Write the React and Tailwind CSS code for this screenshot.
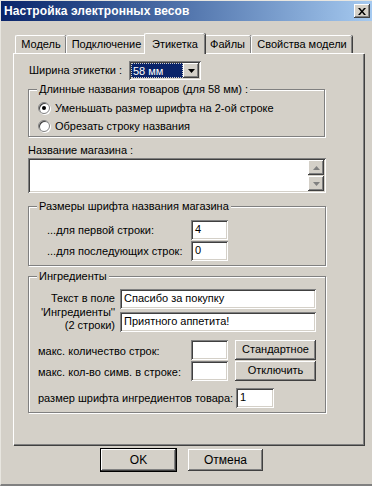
import React from 'react';

const raisedBtn =
  'shadow-[inset_-1px_-1px_#404040,inset_1px_1px_#ffffff,inset_-2px_-2px_#808080,inset_2px_2px_#d4d0c8]';
const sunken =
  'shadow-[inset_1px_1px_#808080,inset_-1px_-1px_#ffffff,inset_2px_2px_#404040,inset_-2px_-2px_#d4d0c8]';

function Field({ value = '', className = '' }) {
  return (
    <div className={`bg-white ${sunken} h-[20px] pl-[4px] pt-[3px] leading-[13px] ${className}`}>
      {value}
    </div>
  );
}

function Button({ children, className = '', isDefault }) {
  return (
    <div
      className={`flex items-center justify-center bg-[#d4d0c8] ${raisedBtn} ${
        isDefault ? 'outline outline-1 outline-black' : ''
      } ${className}`}
    >
      {children}
    </div>
  );
}

function Group({ title, className = '', children }) {
  return (
    <div
      className={`relative border border-[#808080] shadow-[1px_1px_0_#ffffff,inset_1px_1px_0_#ffffff] ${className}`}
    >
      <span className="absolute -top-[8px] left-[8px] bg-[#d4d0c8] px-[2px] leading-[14px]">
        {title}
      </span>
      {children}
    </div>
  );
}

function Radio({ checked, label }) {
  return (
    <div className="flex items-center h-[18px]">
      <div className="relative w-[12px] h-[12px] rounded-full bg-white border border-[#808080] shadow-[inset_1px_1px_#404040,1px_1px_0_#ffffff] ml-[9px] mr-[5px]">
        {checked && (
          <div className="absolute left-[3px] top-[3px] w-[4px] h-[4px] rounded-full bg-black" />
        )}
      </div>
      <span>{label}</span>
    </div>
  );
}

function Tab({ label, active, className = '' }) {
  return (
    <div
      className={`relative flex items-center justify-center border-l border-t border-white rounded-t-[2px] shadow-[inset_-1px_0_#808080,1px_0_#404040] bg-[#d4d0c8] ${
        active ? 'h-[21px] -mb-[1px] z-10 -mx-[2px]' : 'h-[18px]'
      } ${className}`}
    >
      {label}
    </div>
  );
}

export default function App() {
  return (
    <div
      className="w-[372px] h-[486px] bg-[#d4d0c8] text-[11px] text-black overflow-hidden flex flex-col border-t border-l border-[#e8e6e0] border-b-2 border-b-[#808080]"
      style={{ fontFamily: '"Liberation Sans", Arial, sans-serif' }}
    >
      <div className="mt-[0px] ml-[0px] h-[20px] flex items-center justify-between bg-gradient-to-r from-[#0a246a] to-[#a6caf0] pl-[3px] pr-[2px]">
        <span className="text-white font-bold text-[12px] tracking-[0.1px]">
          Настройка электронных весов
        </span>
        <div className={`w-[16px] h-[14px] bg-[#d4d0c8] ${raisedBtn} flex items-center justify-center`}>
          <svg width="8" height="7" viewBox="0 0 8 7">
            <path d="M0 0h2l2 2.5L6 0h2L5 3.5 8 7H6L4 4.5 2 7H0l3-3.5z" fill="#000" />
          </svg>
        </div>
      </div>

      <div className="flex items-end h-[32px] pl-[14px]">
        <Tab label="Модель" className="w-[51px]" />
        <Tab label="Подключение" className="w-[80px]" />
        <Tab label="Этикетка" active className="w-[61px]" />
        <Tab label="Файлы" className="w-[48px]" />
        <Tab label="Свойства модели" className="w-[101px]" />
      </div>

      <div className="ml-[12px] w-[351px] h-[392px] border-l border-t border-white shadow-[inset_-1px_-1px_#808080,1px_1px_0_#404040] pl-[14px] pt-[7px]">
        <div className="flex items-center h-[19px]">
          <span className="w-[101px] pl-[1px]">Ширина этикетки :</span>
          <div className={`flex w-[72px] h-[19px] bg-white ${sunken} p-[2px]`}>
            <div className="flex-1 bg-[#0a246a] text-white pl-[1px] leading-[15px] border border-dotted border-[#d4d0c8]">
              58 мм
            </div>
            <div className={`w-[16px] h-[15px] ${raisedBtn} flex items-center justify-center bg-[#d4d0c8]`}>
              <svg width="7" height="4" viewBox="0 0 7 4">
                <path d="M0 0h7L3.5 4z" fill="#000" />
              </svg>
            </div>
          </div>
        </div>

        <Group title="Длинные названия товаров (для 58 мм) :" className="mt-[9px] w-[297px] h-[48px] pt-[9px]">
          <Radio checked label="Уменьшать размер шрифта на 2-ой строке" />
          <Radio label="Обрезать строку названия" />
        </Group>

        <div className="mt-[6px] h-[14px] leading-[14px]">Название магазина :</div>
        <div className={`mt-[1px] w-[298px] h-[35px] bg-white ${sunken} flex justify-end p-[2px]`}>
          <div className="w-[16px] flex flex-col bg-[#d4d0c8]">
            <div className={`h-[15px] ${raisedBtn} flex items-center justify-center`}>
              <svg width="7" height="4" viewBox="0 0 7 4">
                <path d="M3.5 0L7 4H0z" fill="#808080" />
              </svg>
            </div>
            <div className="flex-1" />
            <div className={`h-[15px] ${raisedBtn} flex items-center justify-center`}>
              <svg width="7" height="4" viewBox="0 0 7 4">
                <path d="M0 0h7L3.5 4z" fill="#808080" />
              </svg>
            </div>
          </div>
        </div>

        <Group title="Размеры шрифта названия магазина" className="mt-[13px] w-[298px] h-[60px] pt-[13px]">
          <div className="flex items-center h-[20px]">
            <span className="w-[162px] pl-[18px]">...для первой строки:</span>
            <Field value="4" className="w-[37px]" />
          </div>
          <div className="flex items-center h-[20px] mt-[1px]">
            <span className="w-[162px] pl-[18px]">...для последующих строк:</span>
            <Field value="0" className="w-[37px]" />
          </div>
        </Group>

        <Group title="Ингредиенты" className="mt-[10px] w-[298px] h-[137px] pt-[12px]">
          <div className="flex">
            <div className="w-[86px] text-right leading-[13.5px] pt-[3px]">
              Текст в поле
              <br />
              'Ингредиенты''
              <br />
              (2 строки)
            </div>
            <div className="ml-[5px] flex flex-col gap-[3px]">
              <Field value="Спасибо за покупку" className="w-[196px]" />
              <Field value="Приятного аппетита!" className="w-[196px]" />
            </div>
          </div>
          <div className="flex items-center mt-[7px] h-[20px]">
            <span className="w-[162px] pl-[9px] pt-[4px]">макс. количество строк:</span>
            <Field className="w-[37px]" />
            <Button className="ml-[7px] w-[81px] h-[20px]">Стандартное</Button>
          </div>
          <div className="flex items-center mt-[1px] h-[20px]">
            <span className="w-[162px] pl-[9px] pt-[3px]">макс. кол-во симв. в строке:</span>
            <Field className="w-[37px]" />
            <Button className="ml-[7px] w-[81px] h-[20px]">Отключить</Button>
          </div>
          <div className="flex items-center mt-[8px] h-[19px]">
            <span className="w-[207px] pl-[9px]">размер шрифта ингредиентов товара:</span>
            <Field value="1" className="w-[38px] h-[19px]" />
          </div>
        </Group>
      </div>

      <div className="flex mt-[4px] pl-[100px] gap-[12px]">
        <Button isDefault className="w-[75px] h-[22px] text-[12px]">OK</Button>
        <Button className="w-[75px] h-[22px] text-[12px]">Отмена</Button>
      </div>
    </div>
  );
}
